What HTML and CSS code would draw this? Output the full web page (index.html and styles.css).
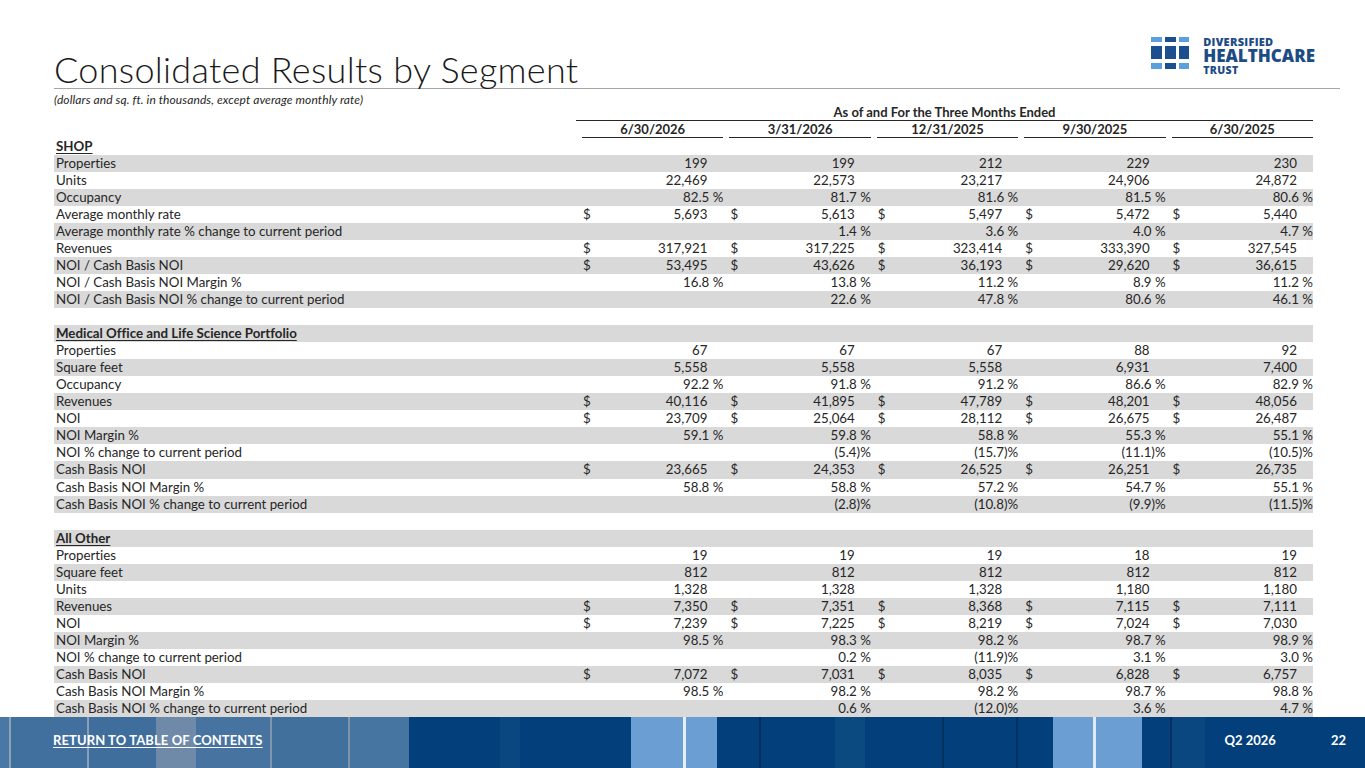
FILE: index.html
```html
<!DOCTYPE html>
<html lang="en">
<head>
<meta charset="utf-8">
<title>Consolidated Results by Segment</title>
<link rel="stylesheet" href="styles.css">
</head>
<body>
<div class="page">
  <header class="head">
    <h1 class="title">Consolidated Results by Segment</h1>
    <div class="logo">
      <div class="mark">
        <i class="lt"></i><i class="dk"></i><i class="lt"></i>
        <i class="dk"></i><i class="dk"></i><i class="dk"></i>
        <i class="lt"></i><i class="dk"></i><i class="lt"></i>
      </div>
      <div class="brand">
        <span class="b1">DIVERSIFIED</span>
        <span class="b2">HEALTHCARE</span>
        <span class="b3">TRUST</span>
      </div>
    </div>
  </header>
  <p class="note">(dollars and sq. ft. in thousands, except average monthly rate)</p>

  <section class="table">
    <div class="period"><span class="period-label">As of and For the Three Months Ended</span></div>
    <div class="r dates">
      <span class="lb"></span>
      <span class="dt">6/30/2026</span><span class="dt">3/31/2026</span><span class="dt">12/31/2025</span><span class="dt">9/30/2025</span><span class="dt">6/30/2025</span>
    </div>

    <div class="r"><span class="lb sec">SHOP</span></div>
    <div class="r s"><span class="lb">Properties</span><span class="c"><b class="n">199</b></span><span class="c"><b class="n">199</b></span><span class="c"><b class="n">212</b></span><span class="c"><b class="n">229</b></span><span class="c"><b class="n">230</b></span></div>
    <div class="r"><span class="lb">Units</span><span class="c"><b class="n">22,469</b></span><span class="c"><b class="n">22,573</b></span><span class="c"><b class="n">23,217</b></span><span class="c"><b class="n">24,906</b></span><span class="c"><b class="n">24,872</b></span></div>
    <div class="r s"><span class="lb">Occupancy</span><span class="c"><b class="p">82.5 %</b></span><span class="c"><b class="p">81.7 %</b></span><span class="c"><b class="p">81.6 %</b></span><span class="c"><b class="p">81.5 %</b></span><span class="c"><b class="p">80.6 %</b></span></div>
    <div class="r"><span class="lb">Average monthly rate</span><span class="c"><i>$</i><b class="n">5,693</b></span><span class="c"><i>$</i><b class="n">5,613</b></span><span class="c"><i>$</i><b class="n">5,497</b></span><span class="c"><i>$</i><b class="n">5,472</b></span><span class="c"><i>$</i><b class="n">5,440</b></span></div>
    <div class="r s"><span class="lb">Average monthly rate % change to current period</span><span class="c"></span><span class="c"><b class="p">1.4 %</b></span><span class="c"><b class="p">3.6 %</b></span><span class="c"><b class="p">4.0 %</b></span><span class="c"><b class="p">4.7 %</b></span></div>
    <div class="r"><span class="lb">Revenues</span><span class="c"><i>$</i><b class="n">317,921</b></span><span class="c"><i>$</i><b class="n">317,225</b></span><span class="c"><i>$</i><b class="n">323,414</b></span><span class="c"><i>$</i><b class="n">333,390</b></span><span class="c"><i>$</i><b class="n">327,545</b></span></div>
    <div class="r s"><span class="lb">NOI / Cash Basis NOI</span><span class="c"><i>$</i><b class="n">53,495</b></span><span class="c"><i>$</i><b class="n">43,626</b></span><span class="c"><i>$</i><b class="n">36,193</b></span><span class="c"><i>$</i><b class="n">29,620</b></span><span class="c"><i>$</i><b class="n">36,615</b></span></div>
    <div class="r"><span class="lb">NOI / Cash Basis NOI Margin %</span><span class="c"><b class="p">16.8 %</b></span><span class="c"><b class="p">13.8 %</b></span><span class="c"><b class="p">11.2 %</b></span><span class="c"><b class="p">8.9 %</b></span><span class="c"><b class="p">11.2 %</b></span></div>
    <div class="r s"><span class="lb">NOI / Cash Basis NOI % change to current period</span><span class="c"></span><span class="c"><b class="p">22.6 %</b></span><span class="c"><b class="p">47.8 %</b></span><span class="c"><b class="p">80.6 %</b></span><span class="c"><b class="p">46.1 %</b></span></div>
    <div class="r"><span class="lb"></span></div>

    <div class="r s"><span class="lb sec">Medical Office and Life Science Portfolio</span></div>
    <div class="r"><span class="lb">Properties</span><span class="c"><b class="n">67</b></span><span class="c"><b class="n">67</b></span><span class="c"><b class="n">67</b></span><span class="c"><b class="n">88</b></span><span class="c"><b class="n">92</b></span></div>
    <div class="r s"><span class="lb">Square feet</span><span class="c"><b class="n">5,558</b></span><span class="c"><b class="n">5,558</b></span><span class="c"><b class="n">5,558</b></span><span class="c"><b class="n">6,931</b></span><span class="c"><b class="n">7,400</b></span></div>
    <div class="r"><span class="lb">Occupancy</span><span class="c"><b class="p">92.2 %</b></span><span class="c"><b class="p">91.8 %</b></span><span class="c"><b class="p">91.2 %</b></span><span class="c"><b class="p">86.6 %</b></span><span class="c"><b class="p">82.9 %</b></span></div>
    <div class="r s"><span class="lb">Revenues</span><span class="c"><i>$</i><b class="n">40,116</b></span><span class="c"><i>$</i><b class="n">41,895</b></span><span class="c"><i>$</i><b class="n">47,789</b></span><span class="c"><i>$</i><b class="n">48,201</b></span><span class="c"><i>$</i><b class="n">48,056</b></span></div>
    <div class="r"><span class="lb">NOI</span><span class="c"><i>$</i><b class="n">23,709</b></span><span class="c"><i>$</i><b class="n">25,064</b></span><span class="c"><i>$</i><b class="n">28,112</b></span><span class="c"><i>$</i><b class="n">26,675</b></span><span class="c"><i>$</i><b class="n">26,487</b></span></div>
    <div class="r s"><span class="lb">NOI Margin %</span><span class="c"><b class="p">59.1 %</b></span><span class="c"><b class="p">59.8 %</b></span><span class="c"><b class="p">58.8 %</b></span><span class="c"><b class="p">55.3 %</b></span><span class="c"><b class="p">55.1 %</b></span></div>
    <div class="r"><span class="lb">NOI % change to current period</span><span class="c"></span><span class="c"><b class="p">(5.4)%</b></span><span class="c"><b class="p">(15.7)%</b></span><span class="c"><b class="p">(11.1)%</b></span><span class="c"><b class="p">(10.5)%</b></span></div>
    <div class="r s"><span class="lb">Cash Basis NOI</span><span class="c"><i>$</i><b class="n">23,665</b></span><span class="c"><i>$</i><b class="n">24,353</b></span><span class="c"><i>$</i><b class="n">26,525</b></span><span class="c"><i>$</i><b class="n">26,251</b></span><span class="c"><i>$</i><b class="n">26,735</b></span></div>
    <div class="r"><span class="lb">Cash Basis NOI Margin %</span><span class="c"><b class="p">58.8 %</b></span><span class="c"><b class="p">58.8 %</b></span><span class="c"><b class="p">57.2 %</b></span><span class="c"><b class="p">54.7 %</b></span><span class="c"><b class="p">55.1 %</b></span></div>
    <div class="r s"><span class="lb">Cash Basis NOI % change to current period</span><span class="c"></span><span class="c"><b class="p">(2.8)%</b></span><span class="c"><b class="p">(10.8)%</b></span><span class="c"><b class="p">(9.9)%</b></span><span class="c"><b class="p">(11.5)%</b></span></div>
    <div class="r"><span class="lb"></span></div>

    <div class="r s"><span class="lb sec">All Other</span></div>
    <div class="r"><span class="lb">Properties</span><span class="c"><b class="n">19</b></span><span class="c"><b class="n">19</b></span><span class="c"><b class="n">19</b></span><span class="c"><b class="n">18</b></span><span class="c"><b class="n">19</b></span></div>
    <div class="r s"><span class="lb">Square feet</span><span class="c"><b class="n">812</b></span><span class="c"><b class="n">812</b></span><span class="c"><b class="n">812</b></span><span class="c"><b class="n">812</b></span><span class="c"><b class="n">812</b></span></div>
    <div class="r"><span class="lb">Units</span><span class="c"><b class="n">1,328</b></span><span class="c"><b class="n">1,328</b></span><span class="c"><b class="n">1,328</b></span><span class="c"><b class="n">1,180</b></span><span class="c"><b class="n">1,180</b></span></div>
    <div class="r s"><span class="lb">Revenues</span><span class="c"><i>$</i><b class="n">7,350</b></span><span class="c"><i>$</i><b class="n">7,351</b></span><span class="c"><i>$</i><b class="n">8,368</b></span><span class="c"><i>$</i><b class="n">7,115</b></span><span class="c"><i>$</i><b class="n">7,111</b></span></div>
    <div class="r"><span class="lb">NOI</span><span class="c"><i>$</i><b class="n">7,239</b></span><span class="c"><i>$</i><b class="n">7,225</b></span><span class="c"><i>$</i><b class="n">8,219</b></span><span class="c"><i>$</i><b class="n">7,024</b></span><span class="c"><i>$</i><b class="n">7,030</b></span></div>
    <div class="r s"><span class="lb">NOI Margin %</span><span class="c"><b class="p">98.5 %</b></span><span class="c"><b class="p">98.3 %</b></span><span class="c"><b class="p">98.2 %</b></span><span class="c"><b class="p">98.7 %</b></span><span class="c"><b class="p">98.9 %</b></span></div>
    <div class="r"><span class="lb">NOI % change to current period</span><span class="c"></span><span class="c"><b class="p">0.2 %</b></span><span class="c"><b class="p">(11.9)%</b></span><span class="c"><b class="p">3.1 %</b></span><span class="c"><b class="p">3.0 %</b></span></div>
    <div class="r s"><span class="lb">Cash Basis NOI</span><span class="c"><i>$</i><b class="n">7,072</b></span><span class="c"><i>$</i><b class="n">7,031</b></span><span class="c"><i>$</i><b class="n">8,035</b></span><span class="c"><i>$</i><b class="n">6,828</b></span><span class="c"><i>$</i><b class="n">6,757</b></span></div>
    <div class="r"><span class="lb">Cash Basis NOI Margin %</span><span class="c"><b class="p">98.5 %</b></span><span class="c"><b class="p">98.2 %</b></span><span class="c"><b class="p">98.2 %</b></span><span class="c"><b class="p">98.7 %</b></span><span class="c"><b class="p">98.8 %</b></span></div>
    <div class="r s"><span class="lb">Cash Basis NOI % change to current period</span><span class="c"></span><span class="c"><b class="p">0.6 %</b></span><span class="c"><b class="p">(12.0)%</b></span><span class="c"><b class="p">3.6 %</b></span><span class="c"><b class="p">4.7 %</b></span></div>
  </section>

  <footer class="foot">
    <a class="toc" href="#">RETURN TO TABLE OF CONTENTS</a>
    <span class="qtr">Q2 2026</span>
    <span class="pg">22</span>
  </footer>
</div>
</body>
</html>
```

FILE: styles.css
```css
html, body {
  margin: 0;
  padding: 0;
  background: #ffffff;
}
body {
  font-family: Lato, "Open Sans", "Liberation Sans", sans-serif;
  color: #262626;
  font-variant-ligatures: none;
}
.page {
  width: 1365px;
  height: 768px;
  display: flex;
  flex-direction: column;
  overflow: hidden;
}

/* header */
.head {
  margin-left: 54px;
  width: 1286px;
  height: 89px;
  box-sizing: border-box;
  border-bottom: 1px solid #a6a6a6;
  display: flex;
  justify-content: space-between;
  align-items: flex-end;
}
.title {
  margin: 0;
  font-weight: 300;
  font-size: 36px;
  line-height: 36px;
  color: #1a1a1a;
  letter-spacing: 0.3px;
  padding-bottom: 1px;
}
.logo {
  display: flex;
  align-items: flex-start;
  gap: 14px;
  margin-right: 25px;
  margin-bottom: 12px;
}
.mark {
  display: grid;
  grid-template-columns: 11px 11px 10px;
  grid-template-rows: 5px 13px 6px;
  column-gap: 3px;
  row-gap: 4px;
  margin-top: 1px;
}
.mark .lt { background: #5b9fdc; }
.mark .dk { background: #1c4f8f; }
.brand {
  display: flex;
  flex-direction: column;
  gap: 1px;
  color: #1d4c85;
  font-family: "Open Sans", "Liberation Sans", sans-serif;
  font-weight: 800;
}
.b1 { font-size: 11px; line-height: 11px; letter-spacing: 0.3px; }
.b2 { font-size: 17px; line-height: 16px; letter-spacing: 0; }
.b3 { font-size: 10.5px; line-height: 11px; letter-spacing: 0.4px; }

.note {
  margin: 4px 0 0 54px;
  font-size: 12px;
  line-height: 13px;
  font-style: italic;
  letter-spacing: 0.1px;
  color: #262626;
}

/* table */
.table {
  margin-left: 54px;
  width: 1259px;
  font-size: 13.3px;
  margin-top: -2px;
}
.period {
  margin-left: 522px;
  height: 16px;
  border-bottom: 1px solid #262626;
  text-align: center;
  font-weight: 700;
  font-size: 13px;
  line-height: 16px;
}
.r {
  display: grid;
  grid-template-columns: 522px repeat(5, 1fr);
  column-gap: 6px;
  height: 17.05px;
  line-height: 17px;
  white-space: nowrap;
}
.r.s { background: #d9d9d9; }
.r.dates { height: 17px; font-size: 13px; }
.dt {
  text-align: center;
  font-weight: 700;
  border-bottom: 1px solid #262626;
  line-height: 16px;
}
.lb {
  padding-left: 2px;
}
.lb.sec {
  font-weight: 700;
  text-decoration: underline;
  text-underline-offset: 2px;
}
.c {
  display: flex;
  justify-content: space-between;
}
.c i {
  font-style: normal;
  padding-left: 1px;
}
.c b {
  font-weight: 400;
  margin-left: auto;
}
.c .n { padding-right: 16px; }
.c .p { padding-right: 0; }

/* footer */
.foot {
  margin-top: auto;
  height: 51px;
  display: flex;
  align-items: flex-start;
  padding: 15px 0 0 53px;
  box-sizing: border-box;
  color: #ffffff;
  font-weight: 700;
  font-size: 13px;
  line-height: 17px;
  background: linear-gradient(90deg,
    #4a78a6 0 9px, #8ea2b6 9px 11px, #41709e 11px 87px, #8a9fb5 87px 89px,
    #3f6e9c 89px 156px, #6f8aa8 156px 196px, #4673a0 196px 270px, #8096ad 270px 272px,
    #41709d 272px 348px, #8095ab 348px 350px, #4675a2 350px 409px,
    #033f7b 409px 500px, #0a4680 500px 520px, #033f7b 520px 631px,
    #6b9fd3 631px 683px, #e8eef5 683px 686px, #6b9fd3 686px 717px,
    #033f7b 717px 759px, #012f5e 759px 761px, #033f7b 761px 835px,
    #0b4a80 835px 865px, #033f7b 865px 942px, #02335f 942px 944px,
    #033f7b 944px 1016px, #02335f 1016px 1018px, #033f7b 1018px 1053px,
    #6b9fd3 1053px 1093px, #e0e8f0 1093px 1096px, #6b9fd3 1096px 1142px,
    #033f7b 1142px 1170px, #022f5e 1170px 1172px, #0a4680 1172px 1205px,
    #033f7b 1205px 1365px);
}
.toc {
  color: #ffffff;
  text-decoration: underline;
  text-underline-offset: 2px;
  letter-spacing: 0.1px;
}
.qtr { margin-left: auto; }
.pg { margin-left: 55px; margin-right: 19px; }
```
